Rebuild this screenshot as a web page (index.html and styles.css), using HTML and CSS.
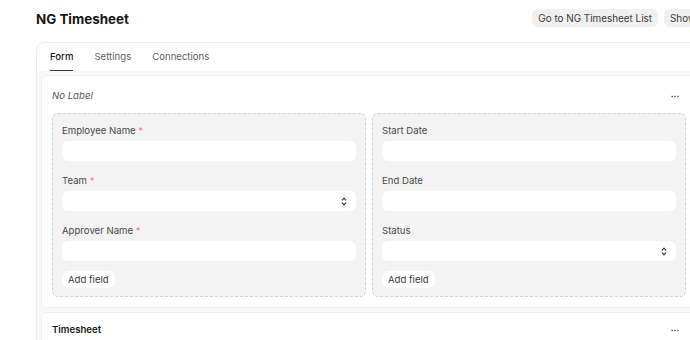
FILE: index.html
```html
<!DOCTYPE html>
<html>
<head>
<meta charset="utf-8">
<link rel="stylesheet" href="styles.css">
</head>
<body>
<div class="page">
  <div class="head">
    <h1 class="title">NG Timesheet</h1>
    <div class="actions">
      <button class="btn">Go to NG Timesheet List</button>
      <button class="btn">Show</button>
    </div>
  </div>
  <div class="card">
    <div class="tabs">
      <div class="tab active">Form</div>
      <div class="tab">Settings</div>
      <div class="tab">Connections</div>
    </div>
    <div class="card-body">
      <div class="section">
        <div class="section-head">
          <span class="section-label">No Label</span>
          <svg class="dots" width="8" height="3" viewBox="0 0 8 3"><rect x="0.5" y="0.8" width="1.3" height="1.3" fill="#444"/><rect x="3.4" y="0.8" width="1.3" height="1.3" fill="#444"/><rect x="6.3" y="0.8" width="1.3" height="1.3" fill="#444"/></svg>
        </div>
        <div class="columns">
          <div class="column">
            <div class="field">
              <div class="label">Employee Name <span class="req">*</span></div>
              <div class="input"></div>
            </div>
            <div class="field">
              <div class="label">Team <span class="req">*</span></div>
              <div class="input select">
                <svg class="arrows" width="6" height="9" viewBox="0 0 6 9"><path d="M1.2 3.2 L3 1.2 L4.8 3.2 M1.2 5.8 L3 7.8 L4.8 5.8" fill="none" stroke="#333" stroke-width="1.1" stroke-linecap="round" stroke-linejoin="round"/></svg>
              </div>
            </div>
            <div class="field">
              <div class="label">Approver Name <span class="req">*</span></div>
              <div class="input"></div>
            </div>
            <button class="add">Add field</button>
          </div>
          <div class="column">
            <div class="field">
              <div class="label">Start Date</div>
              <div class="input"></div>
            </div>
            <div class="field">
              <div class="label">End Date</div>
              <div class="input"></div>
            </div>
            <div class="field">
              <div class="label">Status</div>
              <div class="input select">
                <svg class="arrows" width="6" height="9" viewBox="0 0 6 9"><path d="M1.2 3.2 L3 1.2 L4.8 3.2 M1.2 5.8 L3 7.8 L4.8 5.8" fill="none" stroke="#333" stroke-width="1.1" stroke-linecap="round" stroke-linejoin="round"/></svg>
              </div>
            </div>
            <button class="add">Add field</button>
          </div>
        </div>
      </div>
      <div class="section second">
        <div class="section-head">
          <span class="section-label bold">Timesheet</span>
          <svg class="dots" width="8" height="3" viewBox="0 0 8 3"><rect x="0.5" y="0.8" width="1.3" height="1.3" fill="#444"/><rect x="3.4" y="0.8" width="1.3" height="1.3" fill="#444"/><rect x="6.3" y="0.8" width="1.3" height="1.3" fill="#444"/></svg>
        </div>
      </div>
    </div>
  </div>
</div>
</body>
</html>
```

FILE: styles.css
```css
html, body {
  margin: 0;
  padding: 0;
  overflow: hidden;
  background: #fff;
}
body {
  font-family: Inter, "Noto Sans", sans-serif;
  font-size: 9.6px;
  line-height: 14px;
  color: #383838;
}
.page {
  margin-left: 36px;
  width: 666px;
}
.head {
  display: flex;
  align-items: flex-start;
  height: 33px;
  padding-top: 9px;
}
.title {
  margin: 0;
  font-size: 13.4px;
  line-height: 20px;
  font-weight: 700;
  color: #171717;
}
.actions {
  margin-left: auto;
  display: flex;
  gap: 6px;
}
.btn {
  font-family: inherit;
  font-size: 9.9px;
  line-height: 14px;
  height: 18px;
  padding: 0 6px;
  border: none;
  border-radius: 6px;
  background: #f0f0f0;
  color: #383838;
}
.card {
  border: 1px solid #ededed;
  border-radius: 8px;
  overflow: hidden;
}
.tabs {
  display: flex;
  gap: 21px;
  padding-left: 13px;
  height: 28px;
}
.tab {
  padding: 7px 0 6px;
  color: #5e5e5e;
  border-bottom: 1px solid transparent;
}
.tab.active {
  color: #171717;
  font-weight: 500;
  border-bottom-color: #383838;
}
.card-body {
  background: #f8f8f8;
  padding: 4px 4px 0;
  display: flex;
  flex-direction: column;
  gap: 4px;
}
.section {
  background: #fff;
  border: 1px solid #efefef;
  border-radius: 6px;
  padding: 13px 10px 10px;
}
.section.second {
  padding-top: 10px;
}
.section-head {
  display: flex;
  align-items: center;
  justify-content: space-between;
  height: 14px;
  margin-bottom: 10px;
}
.section-label {
  font-style: italic;
  color: #525252;
}
.section-label.bold {
  font-style: normal;
  font-weight: 600;
  color: #171717;
}
.dots {
  margin-right: 7px;
}
.columns {
  display: grid;
  grid-template-columns: 1fr 1fr;
  gap: 6px;
}
.column {
  background: #f3f3f3;
  border: 1px dashed #d2d2d2;
  border-radius: 6px;
  padding: 10px 9px 8px;
  display: flex;
  flex-direction: column;
  align-items: flex-start;
}
.field {
  align-self: stretch;
  margin-bottom: 13px;
}
.field:last-of-type {
  margin-bottom: 10px;
}
.label {
  color: #474747;
  margin-bottom: 3px;
}
.req {
  color: #f07c7c;
}
.input {
  height: 20px;
  background: #fff;
  border-radius: 6px;
  display: flex;
  align-items: center;
  justify-content: flex-end;
}
.arrows {
  margin-right: 9px;
}
.add {
  font-family: inherit;
  font-size: 9.6px;
  line-height: 14px;
  height: 17px;
  padding: 0 6px;
  border: none;
  border-radius: 6px;
  background: #fff;
  color: #383838;
}
```
